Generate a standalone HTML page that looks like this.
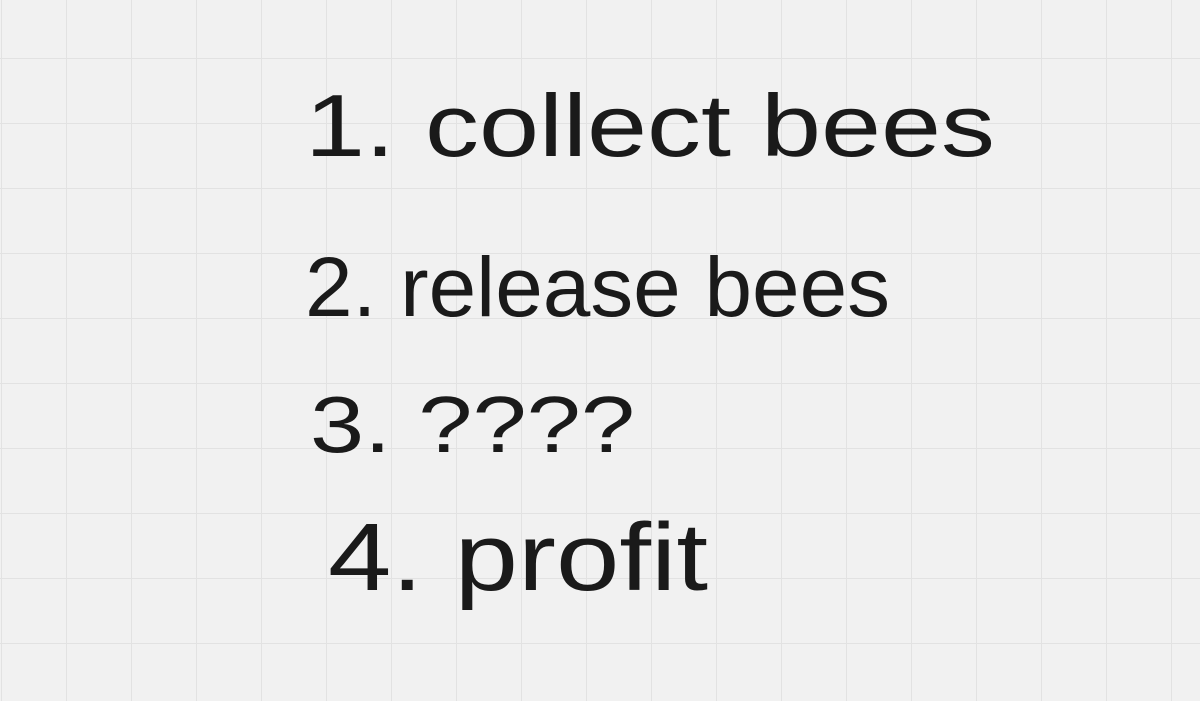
<!DOCTYPE html>
<html><head><meta charset="utf-8"><style>
html,body{margin:0;padding:0;width:1200px;height:701px;overflow:hidden;background:#f1f1f1}
</style></head><body>
<svg width="1200" height="701" xmlns="http://www.w3.org/2000/svg">
<defs><pattern id="g" x="1" y="-7" width="65" height="65" patternUnits="userSpaceOnUse">
<path d="M0 0V65M0 0H65" stroke="#e2e2e2" stroke-width="2" fill="none"/></pattern></defs>
<rect width="1200" height="701" fill="url(#g)"/>
<g font-family="Liberation Sans, sans-serif" fill="#1a1a1a" font-weight="normal">
<text x="305" y="156" font-size="88" textLength="690" lengthAdjust="spacingAndGlyphs">1. collect bees</text>
<text x="305" y="316" font-size="84" textLength="585" lengthAdjust="spacingAndGlyphs">2. release bees</text>
<text x="310" y="452" font-size="80" textLength="325" lengthAdjust="spacingAndGlyphs">3. ????</text>
<text x="328" y="590" font-size="96" textLength="380" lengthAdjust="spacingAndGlyphs">4. profit</text>
</g>
</svg>
</body></html>
